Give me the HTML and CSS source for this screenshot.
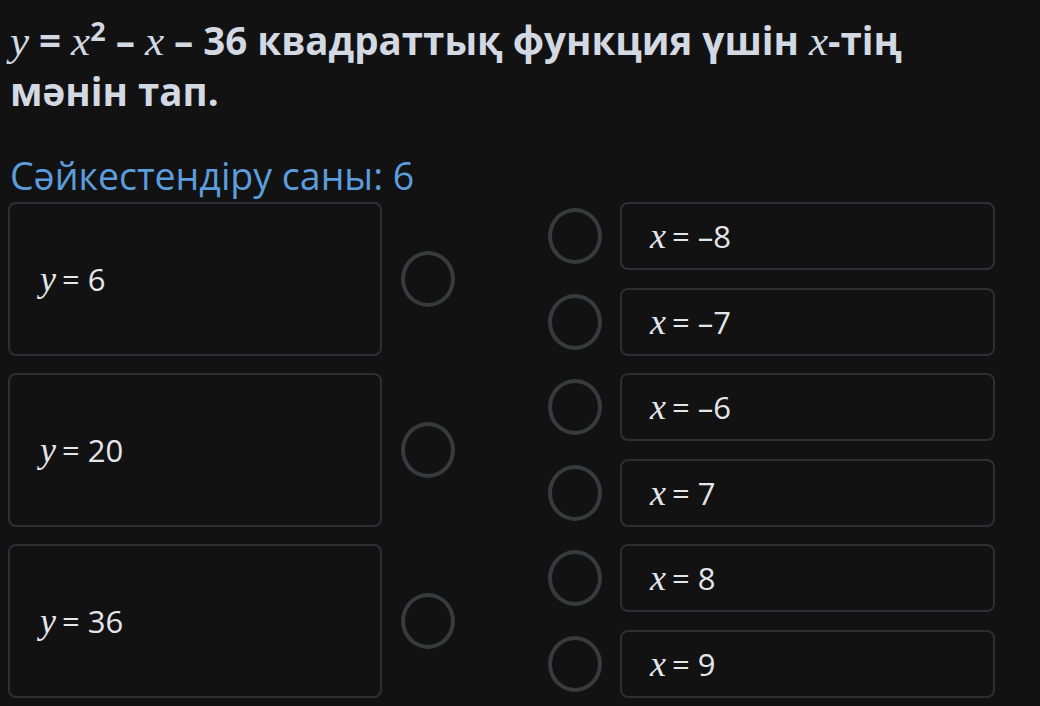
FILE: index.html
```html
<!DOCTYPE html>
<html lang="kk">
<head>
    <meta charset="UTF-8">
    <title>Сәйкестендіру</title>
    <link rel="stylesheet" href="styles.css">
</head>
<body>
    <!-- Сұрақ -->
    <h1 class="question">
        <span class="math">y</span> = <span class="math">x</span><sup>2</sup> – <span class="math">x</span> – 36 квадраттық функция үшін <span class="math">x</span>-тің<br>мәнін тап.
    </h1>

    <div class="count">Сәйкестендіру саны: 6</div>

    <!-- Сәйкестендіру -->
    <div class="match">
        <div class="row">
            <div class="card big"><span class="math">y</span>= 6</div>
            <div class="dot left"></div>
            <div class="pairs">
                <div class="pair"><div class="dot"></div><div class="card small"><span class="math">x</span>= –8</div></div>
                <div class="pair"><div class="dot"></div><div class="card small"><span class="math">x</span>= –7</div></div>
            </div>
        </div>
        <div class="row">
            <div class="card big"><span class="math">y</span>= 20</div>
            <div class="dot left"></div>
            <div class="pairs">
                <div class="pair"><div class="dot"></div><div class="card small"><span class="math">x</span>= –6</div></div>
                <div class="pair"><div class="dot"></div><div class="card small"><span class="math">x</span>= 7</div></div>
            </div>
        </div>
        <div class="row">
            <div class="card big"><span class="math">y</span>= 36</div>
            <div class="dot left"></div>
            <div class="pairs">
                <div class="pair"><div class="dot"></div><div class="card small"><span class="math">x</span>= 8</div></div>
                <div class="pair"><div class="dot"></div><div class="card small"><span class="math">x</span>= 9</div></div>
            </div>
        </div>
    </div>
</body>
</html>
```

FILE: styles.css
```css
body {
    margin: 0;
    padding: 0 8px;
    background-color: #121213;
    color: #d3d9e2;
    font-family: "Open Sans", sans-serif;
    height: 100vh;
    overflow: hidden;
}

.math {
    font-family: "Liberation Serif", serif;
    font-style: italic;
    font-weight: normal;
}

.question {
    margin: 0;
    padding: 15px 0 0 2px;
    font-size: 38.5px;
    line-height: 51px;
    font-weight: 700;
    color: #d3d9e2;
}

.question .math {
    font-size: 43px;
}

.question sup {
    font-size: 27px;
    line-height: 0;
    font-weight: 700;
}

.count {
    margin-top: 36px;
    padding-left: 2px;
    font-size: 37.5px;
    line-height: 46px;
    color: #5b9ddd;
}

.match {
    display: flex;
    flex-direction: column;
    gap: 17px;
    margin-top: 3px;
}

.row {
    display: flex;
    align-items: center;
}

.card {
    display: flex;
    align-items: center;
    border: 2px solid #2e2f33;
    border-radius: 8px;
    box-sizing: border-box;
    font-size: 31px;
    color: #e3e6ea;
    flex-shrink: 0;
}

.card .math {
    font-size: 36px;
    margin-right: 6px;
}

.big {
    width: 374px;
    height: 154px;
    padding-left: 30px;
}

.small {
    width: 375px;
    height: 68px;
    padding-left: 28px;
}

.dot {
    width: 46px;
    height: 48px;
    border: 4px solid #393a3e;
    border-radius: 50%;
    flex-shrink: 0;
}

.dot.left {
    margin-left: 19px;
    margin-right: 93px;
}

.pairs {
    display: flex;
    flex-direction: column;
    gap: 18px;
}

.pair {
    display: flex;
    align-items: center;
    gap: 18px;
}
```
